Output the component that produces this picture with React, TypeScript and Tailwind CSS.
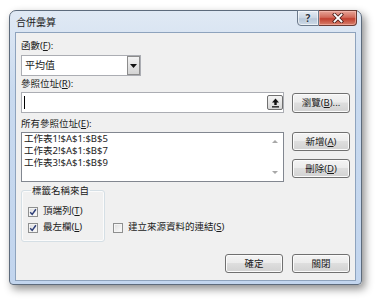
import React from "react";

const btn =
  "flex items-center justify-center h-[19px] w-[58px] rounded-[3px] border border-[#707070] bg-[linear-gradient(to_bottom,#f4f4f4_0%,#ececec_45%,#dedede_50%,#d2d2d2_100%)] shadow-[inset_0_0_0_1px_#fbfbfb] text-[9.5px] leading-none text-[#1a1a1a]";

function U({ c }: { c: string }) {
  return <span className="underline underline-offset-[1px]">{c}</span>;
}

function Check({ checked }: { checked: boolean }) {
  return (
    <span className="w-[10px] h-[10px] border border-[#8e8f8f] bg-[linear-gradient(135deg,#dcdcdc,#fdfdfd)] shadow-[inset_0_0_0_1px_#f4f4f4] flex items-center justify-center shrink-0">
      {checked && (
        <svg width="8" height="8" viewBox="0 0 8 8">
          <path d="M1.2 4.2 L3.2 6.4 L6.9 1.2" fill="none" stroke="#2f3f78" strokeWidth="1.5" />
        </svg>
      )}
    </span>
  );
}

export default function App() {
  return (
    <div className="w-[378px] h-[303px] bg-white pl-[9px] pt-[10px] font-['Noto_Sans','Noto_Sans_CJK_TC',sans-serif] text-[#1a1a1a]">
      <div className="relative w-[353px] h-[275px] rounded-t-[7px] rounded-b-[4px] border border-[#5d6b7c] bg-[linear-gradient(to_bottom,#e0e9f4,#c9daef_30%,#c2d5ee)] shadow-[3px_4px_9px_rgba(0,0,0,0.45)] flex flex-col px-[5px] pb-[3px]">
        {/* title bar */}
        <div className="h-[21px] flex items-center pl-[1px] text-[10px] leading-none text-[#1e1e1e]">
          合併彙算
        </div>
        {/* caption buttons */}
        <div className="absolute top-[-1px] right-[4px] flex h-[16px]">
          <div className="w-[22px] h-full border border-[#6c7a8c] rounded-bl-[4px] bg-[linear-gradient(to_bottom,#e6edf5,#c9d5e3_50%,#b6c6d8_55%,#cfdbe8)] shadow-[inset_0_0_0_1px_rgba(255,255,255,0.6)] flex items-center justify-center text-[10px] font-bold leading-none text-[#2a3240] [text-shadow:0_0_2px_#fff]">
            ?
          </div>
          <div className="w-[38px] h-full border border-l-0 border-[#6a3a33] rounded-br-[4px] bg-[linear-gradient(to_bottom,#e7a598,#d26a5a_45%,#c1402f_55%,#d7806d)] shadow-[inset_0_0_0_1px_rgba(255,200,190,0.5)] flex items-center justify-center">
            <svg width="12" height="10" viewBox="0 0 12 10">
              <path d="M2.5 1.5 L9.5 8.5 M9.5 1.5 L2.5 8.5" stroke="#4a1d18" strokeWidth="3.4" strokeLinecap="square" />
              <path d="M2.5 1.5 L9.5 8.5 M9.5 1.5 L2.5 8.5" stroke="#ffffff" strokeWidth="1.8" strokeLinecap="square" />
            </svg>
          </div>
        </div>

        {/* client area */}
        <div className="flex-1 bg-[#f0f0f0] border border-[#8ea3bd] pl-[5px] pr-[5px] pt-[6px] text-[9.5px]">
          <div className="h-[13px] leading-[13px]">
            函數(<U c="F" />):
          </div>
          <div className="mt-[3px] w-[120px] h-[21px] border border-[#abadb3] bg-white flex items-stretch">
            <div className="flex-1 flex items-center pl-[3px] text-[10px]">平均值</div>
            <div className="w-[13px] border border-[#8c8c8c] bg-[linear-gradient(to_bottom,#f3f3f3,#e3e3e3_50%,#d4d4d4)] flex items-center justify-center">
              <svg width="7" height="4" viewBox="0 0 7 4">
                <path d="M0 0 H7 L3.5 4 Z" fill="#111" />
              </svg>
            </div>
          </div>

          <div className="mt-[1px] h-[13px] leading-[13px]">
            參照位址(<U c="R" />):
          </div>
          <div className="mt-[2px] flex gap-[8px] items-start">
            <div className="w-[263px] h-[21px] border border-[#abadb3] bg-white flex items-center justify-between pl-[2px]">
              <div className="w-[1px] h-[13px] bg-black" />
              <div className="w-[16px] h-[15px] mr-[0px] border border-[#707070] rounded-[2px] bg-[linear-gradient(to_bottom,#f4f4f4,#e6e6e6_50%,#d6d6d6)] flex items-center justify-center">
                <svg width="9" height="10" viewBox="0 0 9 10">
                  <path d="M4.5 0.5 L8 4.5 H5.7 V7 H3.3 V4.5 H1 Z" fill="#111" />
                  <rect x="1" y="8.2" width="7" height="1.3" fill="#111" />
                </svg>
              </div>
            </div>
            <div className={btn + " mt-[1px] h-[20px]"}>
              瀏覽(<U c="B" />)...
            </div>
          </div>

          <div className="mt-[4px] h-[13px] leading-[13px]">
            所有參照位址(<U c="E" />):
          </div>
          <div className="mt-[2px] flex gap-[8px] items-start">
            <div className="w-[263px] h-[50px] border border-[#828790] bg-white flex">
              <div className="flex-1 pl-[2px] leading-[12px]">
                <div>工作表1!$A$1:$B$5</div>
                <div>工作表2!$A$1:$B$7</div>
                <div>工作表3!$A$1:$B$9</div>
              </div>
              <div className="w-[17px] flex flex-col justify-between">
                <div className="h-[17px] flex items-center justify-center">
                  <svg width="6" height="3" viewBox="0 0 6 3">
                    <path d="M0 3 L3 0 L6 3 Z" fill="#a8a8a8" />
                  </svg>
                </div>
                <div className="h-[17px] flex items-center justify-center">
                  <svg width="6" height="3" viewBox="0 0 6 3">
                    <path d="M0 0 L6 0 L3 3 Z" fill="#a8a8a8" />
                  </svg>
                </div>
              </div>
            </div>
            <div className="flex flex-col gap-[8px]">
              <div className={btn}>
                新增(<U c="A" />)
              </div>
              <div className={btn}>
                刪除(<U c="D" />)
              </div>
            </div>
          </div>

          <div className="mt-[2px] flex items-start">
            <fieldset className="w-[84px] h-[58px] border border-[#d5dfe5] rounded-[3px] pl-[6px] shadow-[inset_0_0_0_1px_#fbfbfb]">
              <legend className="ml-[3px] px-[1px] h-[13px] leading-[13px]">標籤名稱來自</legend>
              <div className="mt-[8px] flex flex-col gap-[3px]">
                <label className="h-[13px] flex items-center gap-[5px]">
                  <Check checked />
                  <span>
                    頂端列(<U c="T" />)
                  </span>
                </label>
                <label className="h-[13px] flex items-center gap-[5px]">
                  <Check checked />
                  <span>
                    最左欄(<U c="L" />)
                  </span>
                </label>
              </div>
            </fieldset>
            <label className="ml-[8px] mt-[37px] h-[13px] flex items-center gap-[5px]">
              <Check checked={false} />
              <span>
                建立來源資料的連結(<U c="S" />)
              </span>
            </label>
          </div>

          <div className="mt-[12px] flex justify-end gap-[9px]">
            <div className={btn + " border-[#3c7fb1] shadow-[inset_0_0_0_1px_#a9dcf6]"}>確定</div>
            <div className={btn}>關閉</div>
          </div>
        </div>
      </div>
    </div>
  );
}
